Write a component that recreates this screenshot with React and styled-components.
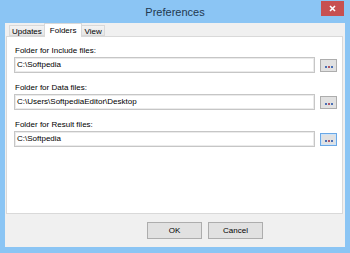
import React from "react";
import styled, { createGlobalStyle } from "styled-components";

const Global = createGlobalStyle`
  html, body { margin: 0; padding: 0; }
  body { font-family: "Liberation Sans", Arial, sans-serif; }
  * { box-sizing: border-box; }
`;

const Window = styled.div`
  width: 350px;
  height: 253px;
  background: #8bc5f4;
  display: flex;
  flex-direction: column;
  padding: 0 5px 6px 5px;
`;

const TitleBar = styled.div`
  height: 23px;
  flex: none;
  display: grid;
  grid-template-columns: 1fr auto 1fr;
  align-items: center;
`;

const Title = styled.div`
  grid-column: 2;
  font-size: 11px;
  color: #22384f;
  line-height: 14px;
`;

const CloseButton = styled.div`
  grid-column: 3;
  justify-self: end;
  align-self: start;
  margin: 1px 1px 0 0;
  width: 23px;
  height: 15px;
  background: #c75050;
  display: flex;
  align-items: center;
  justify-content: center;
`;

const Client = styled.div`
  flex: 1;
  background: #f0f0f0;
  display: flex;
  flex-direction: column;
  padding: 0 2px 0 1px;
`;

const TabStrip = styled.div`
  height: 14px;
  flex: none;
  display: flex;
  align-items: flex-end;
  padding-left: 3px;
  position: relative;
  z-index: 1;
  margin-bottom: -1px;
`;

const Tab = styled.div`
  height: ${(p) => (p.$active ? "14px" : "11px")};
  padding: ${(p) => (p.$active ? "2px 5px 0" : "1px 2px 0")};
  margin: ${(p) => (p.$active ? "0 -1px" : "0 0 1px")};
  background: ${(p) => (p.$active ? "#ffffff" : "linear-gradient(#f3f3f3, #e6e6e6)")};
  border: 1px solid #d9d9d9;
  border-bottom: ${(p) => (p.$active ? "none" : "1px solid #d9d9d9")};
  font-size: 8px;
  line-height: 9px;
  color: #000;
  position: relative;
  z-index: ${(p) => (p.$active ? 2 : 1)};
`;

const Panel = styled.div`
  height: 178px;
  flex: none;
  background: #fff;
  border: 1px solid #d9d9d9;
  padding: 9px 5px 0 7px;
  display: flex;
  flex-direction: column;
  gap: 10px;
`;

const Field = styled.div`
  display: flex;
  flex-direction: column;
  gap: 1px;
`;

const Label = styled.div`
  font-size: 8px;
  line-height: 10px;
  color: #000;
  padding-left: 1px;
`;

const Row = styled.div`
  display: flex;
  align-items: center;
  gap: 5px;
`;

const Input = styled.div`
  flex: 1;
  height: 16px;
  border: 1px solid #c6c6c6;
  box-shadow: inset 0 0 0 1px #ebebeb;
  background: #fff;
  font-size: 8px;
  line-height: 14px;
  padding-left: 2px;
  color: #000;
  white-space: nowrap;
`;

const BrowseButton = styled.div`
  width: 17px;
  height: 13px;
  flex: none;
  background: #e1e1e1;
  border: 1px solid ${(p) => (p.$focused ? "#6aa8e6" : "#adadad")};
  box-shadow: ${(p) => (p.$focused ? "inset 0 0 0 1px #cfe3f7" : "none")};
  display: flex;
  align-items: center;
  justify-content: center;
  gap: 1px;
  padding-top: 3px;
`;

const Dot = styled.span`
  width: 2px;
  height: 2px;
  background: ${(p) => p.$c};
`;

const Footer = styled.div`
  flex: 1;
  display: flex;
  align-items: flex-start;
  gap: 6px;
  padding: 8px 0 0 141px;
`;

const DialogButton = styled.div`
  width: 55px;
  height: 17px;
  background: #e1e1e1;
  border: 1px solid #adadad;
  font-size: 8px;
  line-height: 15px;
  text-align: center;
  color: #000;
`;

const fields = [
  { label: "Folder for Include files:", value: "C:\\Softpedia" },
  { label: "Folder for Data files:", value: "C:\\Users\\SoftpediaEditor\\Desktop" },
  { label: "Folder for Result files:", value: "C:\\Softpedia", focused: true },
];

export default function App() {
  return (
    <>
      <Global />
      <Window>
        <TitleBar>
          <Title>Preferences</Title>
          <CloseButton>
            <svg width="7" height="7" viewBox="0 0 7 7">
              <path d="M1 1 L6 6 M6 1 L1 6" stroke="#fff" strokeWidth="1.6" />
            </svg>
          </CloseButton>
        </TitleBar>
        <Client>
          <TabStrip>
            <Tab>Updates</Tab>
            <Tab $active>Folders</Tab>
            <Tab>View</Tab>
          </TabStrip>
          <Panel>
            {fields.map((f) => (
              <Field key={f.label}>
                <Label>{f.label}</Label>
                <Row>
                  <Input>{f.value}</Input>
                  <BrowseButton $focused={f.focused}>
                    <Dot $c="#4a6fb5" />
                    <Dot $c="#b05a6a" />
                    <Dot $c="#4a6fb5" />
                  </BrowseButton>
                </Row>
              </Field>
            ))}
          </Panel>
          <Footer>
            <DialogButton>OK</DialogButton>
            <DialogButton>Cancel</DialogButton>
          </Footer>
        </Client>
      </Window>
    </>
  );
}
